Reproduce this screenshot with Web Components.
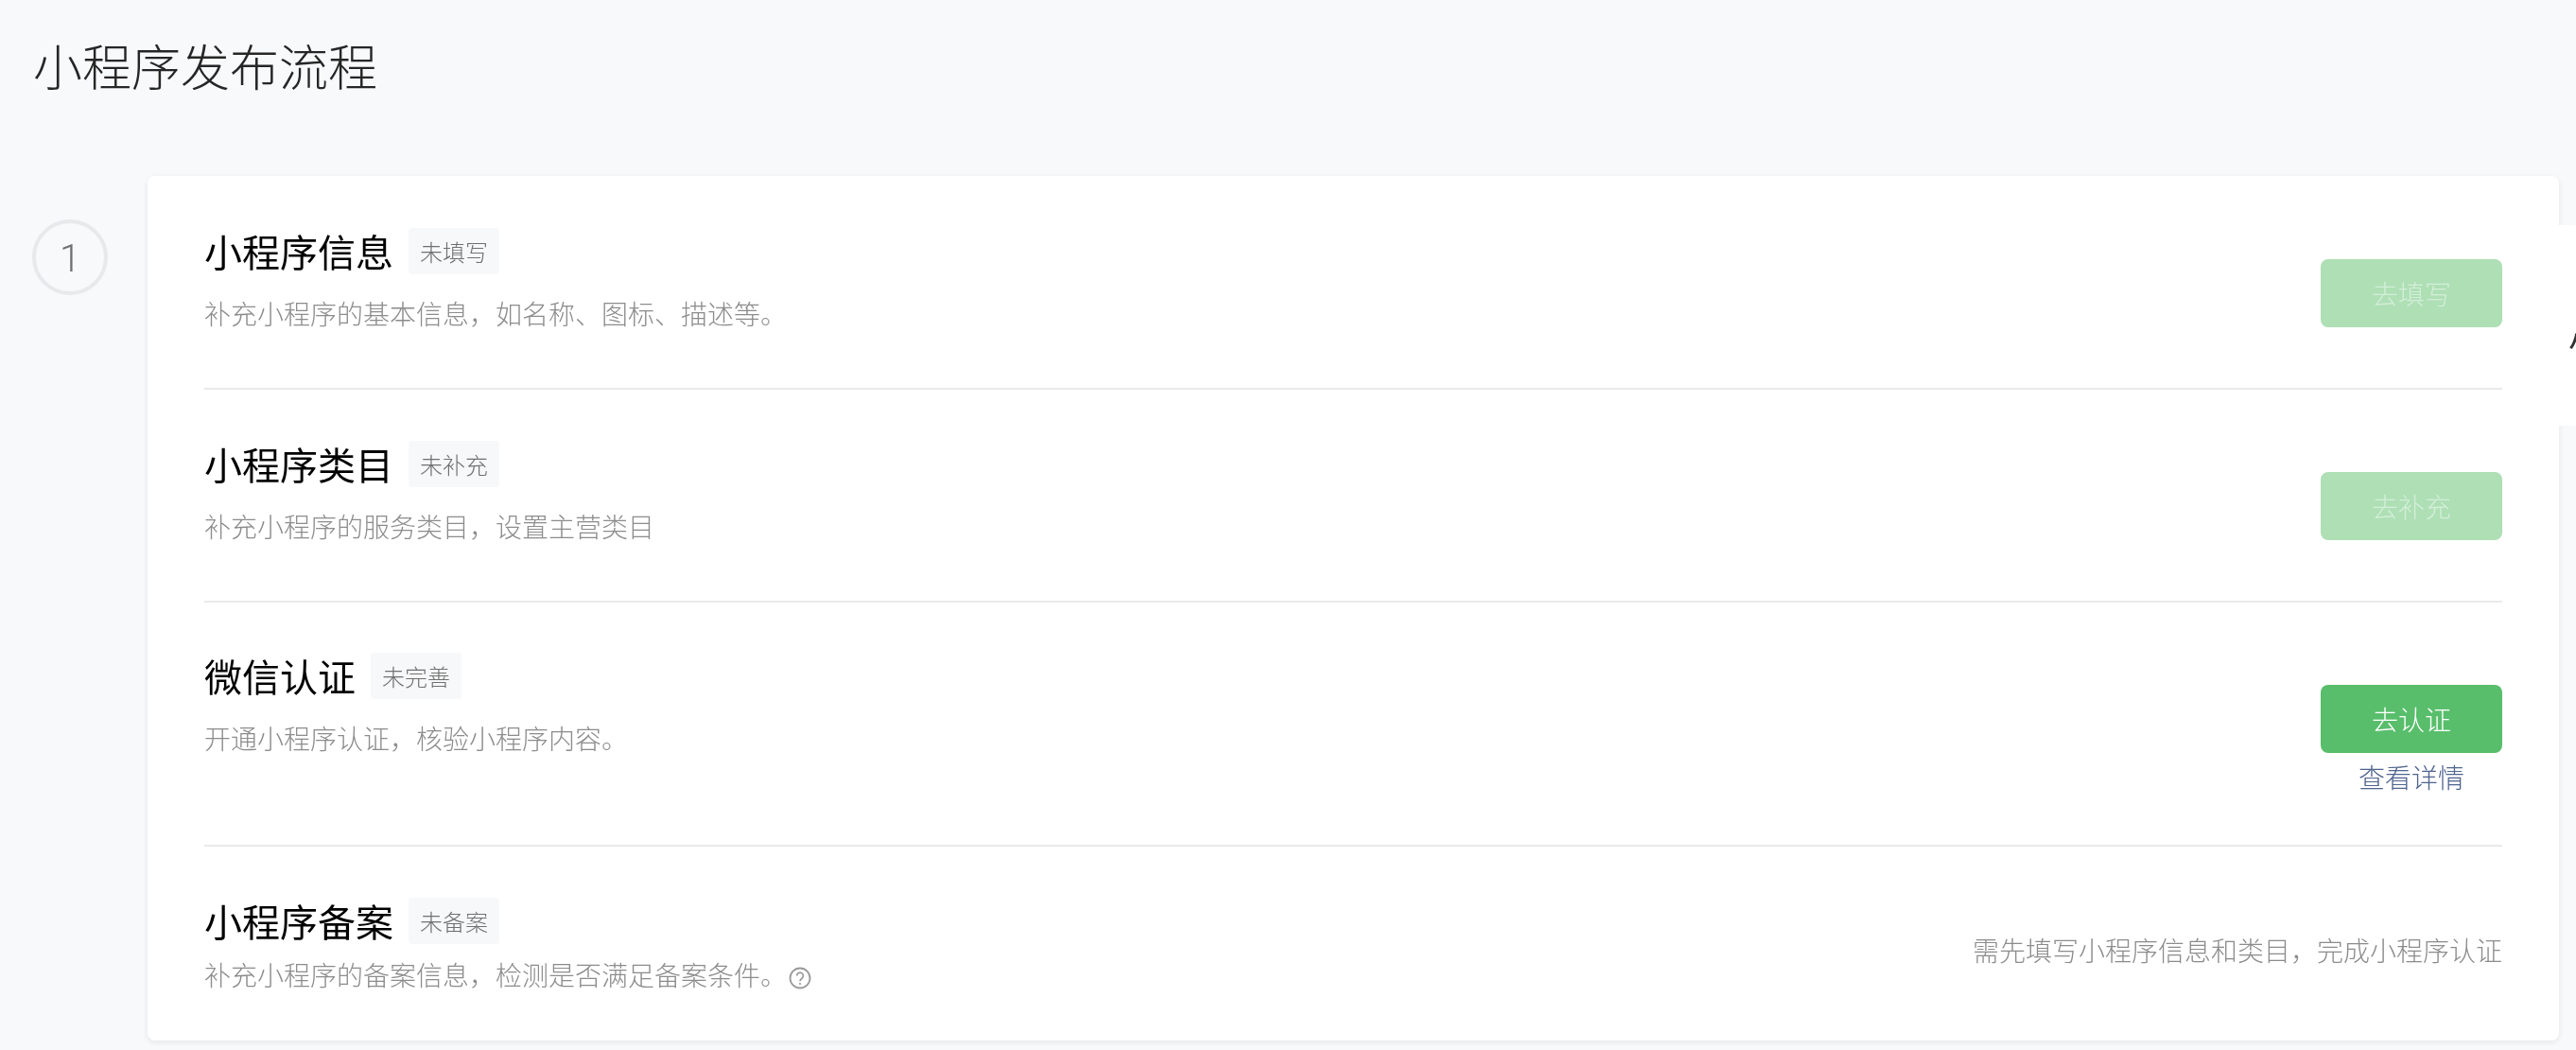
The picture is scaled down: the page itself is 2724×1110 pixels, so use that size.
<!DOCTYPE html>
<html lang="zh"><head><meta charset="utf-8"><style>
html,body{margin:0;height:100%;overflow:hidden;background:#f8f9fb;font-family:"Noto Sans CJK SC","Noto Sans",sans-serif}
</style></head><body>
<flow-page>
  <span slot="title">小程序发布流程</span>
  <flow-step num="1">
    <flow-row name="小程序信息" status="未填写" h="226" pad="55" act="88">
      <span slot="desc">补充小程序的基本信息，如名称、图标、描述等。</span>
      <flow-btn slot="action" disabled>去填写</flow-btn>
    </flow-row>
    <flow-row name="小程序类目" status="未补充" h="225" pad="54" act="87">
      <span slot="desc">补充小程序的服务类目，设置主营类目</span>
      <flow-btn slot="action" disabled>去补充</flow-btn>
    </flow-row>
    <flow-row name="微信认证" status="未完善" h="258" pad="53" act="87" link="查看详情">
      <span slot="desc">开通小程序认证，核验小程序内容。</span>
      <flow-btn slot="action">去认证</flow-btn>
    </flow-row>
    <flow-row name="小程序备案" status="未备案" h="205" pad="54" act="89" last tip="需先填写小程序信息和类目，完成小程序认证">
      <span slot="desc">补充小程序的备案信息，检测是否满足备案条件。<help-icon></help-icon></span>
    </flow-row>
  </flow-step>
</flow-page>
<script>
class Base extends HTMLElement{
  constructor(){super();this.attachShadow({mode:'open'});}
}
customElements.define('flow-page',class extends Base{
  connectedCallback(){this.shadowRoot.innerHTML=`<style>
  :host{display:block;position:relative;height:1110px;box-sizing:border-box;padding:0 18px 0 35px;overflow:hidden;will-change:transform}
  h1{margin:0;padding-top:34px;height:186px;box-sizing:border-box;font-size:52px;line-height:70px;font-weight:300;color:#262626}
  .side{position:absolute;right:0;top:238px;width:18px;height:212px;background:#fff;overflow:hidden}
  .side span{position:absolute;left:10px;top:96px;font-size:36px;line-height:48px;color:#333;white-space:nowrap}
  </style><h1><slot name="title"></slot></h1><slot></slot><div class="side"><span>小程序</span></div>`;}
});
customElements.define('flow-step',class extends Base{
  connectedCallback(){const n=this.getAttribute('num');this.shadowRoot.innerHTML=`<style>
  :host{display:flex;align-items:flex-start;gap:42px}
  .num{flex:none;width:80px;height:80px;margin:46px 0 0 -1px;box-sizing:border-box;border:4px solid #e7e9eb;border-radius:50%;display:flex;align-items:center;justify-content:center;font:300 40px/44px Roboto,"Noto Sans",sans-serif;color:#707070;padding-top:4px}
  .card{flex:1;background:#fff;border-radius:8px;padding:0 60px;box-shadow:0 2px 6px rgba(0,0,0,.08)}
  </style><div class="num">${n}</div><div class="card"><slot></slot></div>`;}
});
customElements.define('flow-row',class extends Base{
  connectedCallback(){const a=k=>this.getAttribute(k);const last=this.hasAttribute('last');this.shadowRoot.innerHTML=`<style>
  :host{display:block;box-sizing:border-box;height:${a('h')}px;${last?'':'border-bottom:2px solid #e9eaeb;'}}
  .wrap{display:flex;justify-content:space-between;height:100%}
  .main{padding-top:${a('pad')}px}
  .head{display:flex;align-items:center;height:49px}
  .name{font-size:40px;font-weight:400;color:#000;line-height:49px}
  .badge{margin-left:16px;height:49px;line-height:49px;padding:0 12px;background:#f7f8fa;border-radius:4px;font-size:24px;font-weight:300;color:#707070}
  .desc{margin-top:${last?'12':'21'}px;font-size:28px;font-weight:300;line-height:40px;color:#8c8c8c;display:flex;align-items:center}
  .act{display:flex;flex-direction:column;align-items:center;padding-top:${a('act')}px}
  .link{margin-top:5px;font-size:28px;font-weight:300;line-height:40px;color:#4f648f}
  .tip{font-size:28px;font-weight:300;line-height:40px;color:#8c8c8c}
  </style><div class="wrap"><div class="main"><div class="head"><span class="name">${a('name')}</span><span class="badge">${a('status')}</span></div><div class="desc"><slot name="desc"></slot></div></div>
  <div class="act"><slot name="action"></slot>${a('link')?`<span class="link">${a('link')}</span>`:''}${a('tip')?`<span class="tip">${a('tip')}</span>`:''}</div></div>`;}
});
customElements.define('flow-btn',class extends Base{
  connectedCallback(){const d=this.hasAttribute('disabled');this.shadowRoot.innerHTML=`<style>
  :host{display:flex;width:192px;height:72px;align-items:center;justify-content:center;border-radius:8px;background:${d?'#aedfb5':'#58be6b'};color:${d?'#d3eed8':'#fff'};font-size:28px;font-weight:300;padding-bottom:1px;box-sizing:border-box}
  </style><slot></slot>`;}
});
customElements.define('help-icon',class extends Base{
  connectedCallback(){this.shadowRoot.innerHTML=`<style>:host{display:inline-flex;vertical-align:middle;margin-left:2px}</style>
  <svg width="24" height="24" viewBox="0 0 24 24" fill="none" stroke="#9a9a9a" stroke-width="1.8"><circle cx="12" cy="12" r="10.5"/><path d="M8.6 9.6a3.4 3.4 0 1 1 5.4 2.7c-1.3.9-2 1.5-2 3" stroke-width="1.7"/><circle cx="12" cy="18" r="1.1" fill="#9a9a9a" stroke="none"/></svg>`;}
});
</script>
</body></html>
